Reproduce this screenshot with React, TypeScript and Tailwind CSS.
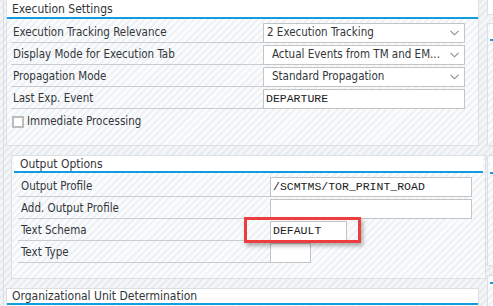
import React from "react";

const panelBg =
  "bg-[repeating-linear-gradient(135deg,#eff2f5_0px,#eff2f5_2px,#fafbfc_2px,#fafbfc_5px)]";

function Chevron() {
  return (
    <svg width="9" height="6" viewBox="0 0 9 6" className="shrink-0">
      <path d="M0.5 0.8 L4.5 4.8 L8.5 0.8" fill="none" stroke="#8c8c8c" strokeWidth="1.1" />
    </svg>
  );
}

function SelectBox({ text, pad }: { text: string; pad: string }) {
  return (
    <div className="w-[202px] h-[20px] shrink-0 bg-white border border-[#c4c4c4] flex items-center pr-[5px]">
      <span className={"grow whitespace-nowrap " + pad}>{text}</span>
      <Chevron />
    </div>
  );
}

function MonoInput({ value, width }: { value: string; width: string }) {
  return (
    <div
      className={
        "h-[20px] shrink-0 bg-white border border-[#c4c4c4] flex items-center pl-[2px] font-['Liberation_Mono',monospace] text-[11.5px] text-[#222] " +
        width
      }
    >
      {value}
    </div>
  );
}

function Row({
  label,
  labelWidth,
  children,
}: {
  label: string;
  labelWidth: string;
  children: React.ReactNode;
}) {
  return (
    <div className="flex items-end h-[22px]">
      <div
        className={
          "h-full border-b border-[#c9ccd0] flex items-center pt-[2px] shrink-0 " +
          labelWidth
        }
      >
        {label}
      </div>
      {children}
    </div>
  );
}

export default function App() {
  return (
    <div className="relative w-[493px] h-[306px] overflow-hidden flex bg-[repeating-linear-gradient(135deg,#e6ebef_0px,#e6ebef_2px,#f3f5f7_2px,#f3f5f7_5px)] font-['DejaVu_Sans_Condensed','Liberation_Sans',sans-serif] text-[11.5px] text-[#32363a]">
      {/* left column */}
      <div className="w-[487px] shrink-0 pl-[3px]">
        <div className="h-full border-l border-[#d9dde1] flex flex-col">
          {/* Execution Settings */}
          <div className={"ml-[2px] w-[473px] h-[146px] shrink-0 border border-t-0 border-[#dcdfe3] " + panelBg}>
            <div className="h-[17px] bg-white pl-[5px] flex items-center text-[12px]">
              Execution Settings
            </div>
            <div className="h-[2px] bg-[#129ddf]" />
            <div className="pt-[2px] pl-[4px]">
              <Row label="Execution Tracking Relevance" labelWidth="w-[252px] pl-[2px]">
                <SelectBox text="2 Execution Tracking" pad="pl-[3px]" />
              </Row>
              <Row label="Display Mode for Execution Tab" labelWidth="w-[252px] pl-[2px]">
                <SelectBox text="Actual Events from TM and EM..." pad="pl-[8px]" />
              </Row>
              <Row label="Propagation Mode" labelWidth="w-[252px] pl-[2px]">
                <SelectBox text="Standard Propagation" pad="pl-[8px]" />
              </Row>
              <Row label="Last Exp. Event" labelWidth="w-[252px] pl-[2px]">
                <MonoInput value="DEPARTURE" width="w-[202px]" />
              </Row>
              <div className="mt-[4px] pl-[1px] flex items-center gap-[3px]">
                <div className="w-[12px] h-[12px] border-2 border-[#bdbdbd] bg-white" />
                <span>Immediate Processing</span>
              </div>
            </div>
          </div>

          {/* Output Options */}
          <div className={"mt-[9px] ml-[7px] w-[475px] h-[124px] shrink-0 border border-[#dcdfe3] px-[2px] " + panelBg}>
            <div className="h-[15px] bg-white pl-[6px] flex items-center text-[12px]">
              Output Options
            </div>
            <div className="h-[2px] bg-[#129ddf]" />
            <div className="pt-[2px] pl-[4px]">
              <Row label="Output Profile" labelWidth="w-[252px] pl-[3px]">
                <MonoInput value="/SCMTMS/TOR_PRINT_ROAD" width="w-[202px]" />
              </Row>
              <Row label="Add. Output Profile" labelWidth="w-[252px] pl-[3px]">
                <MonoInput value="" width="w-[202px]" />
              </Row>
              <Row label="Text Schema" labelWidth="w-[252px] pl-[3px]">
                <MonoInput value="DEFAULT" width="w-[77px]" />
              </Row>
              <Row label="Text Type" labelWidth="w-[252px] pl-[3px]">
                <MonoInput value="" width="w-[41px]" />
              </Row>
            </div>
          </div>

          {/* Organizational Unit Determination */}
          <div className={"mt-[9px] ml-[2px] w-[473px] grow border border-b-0 border-[#dcdfe3] " + panelBg}>
            <div className="h-[14px] bg-white pl-[5px] flex items-center text-[12px]">
              Organizational Unit Determination
            </div>
            <div className="h-[2px] bg-[#129ddf]" />
          </div>
        </div>
      </div>

      {/* right column, cut off */}
      <div className="w-[20px] shrink-0 flex flex-col">
        <div className="h-[15px] shrink-0 bg-white border-l border-b border-[#dcdfe3]" />
        <div className={"mt-[8px] h-[123px] shrink-0 border border-r-0 border-[#dcdfe3] pl-[2px] " + panelBg}>
          <div className="h-[15px] bg-white" />
          <div className="h-[2px] bg-[#129ddf]" />
        </div>
        <div className={"mt-[9px] h-[111px] shrink-0 border border-r-0 border-[#dcdfe3] pl-[2px] " + panelBg}>
          <div className="h-[16px] bg-white" />
          <div className="h-[2px] bg-[#129ddf]" />
        </div>
        <div className={"mt-[9px] grow border border-r-0 border-b-0 border-[#dcdfe3] pl-[2px] " + panelBg}>
          <div className="h-[6px] bg-white" />
          <div className="h-[2px] bg-[#129ddf]" />
        </div>
      </div>

      {/* red highlight annotation */}
      <div className="absolute left-[244px] top-[217px] w-[117px] h-[26px] border-[3px] border-[#ec3e3e] shadow-[2px_3px_4px_rgba(0,0,0,0.3)]" />
    </div>
  );
}
